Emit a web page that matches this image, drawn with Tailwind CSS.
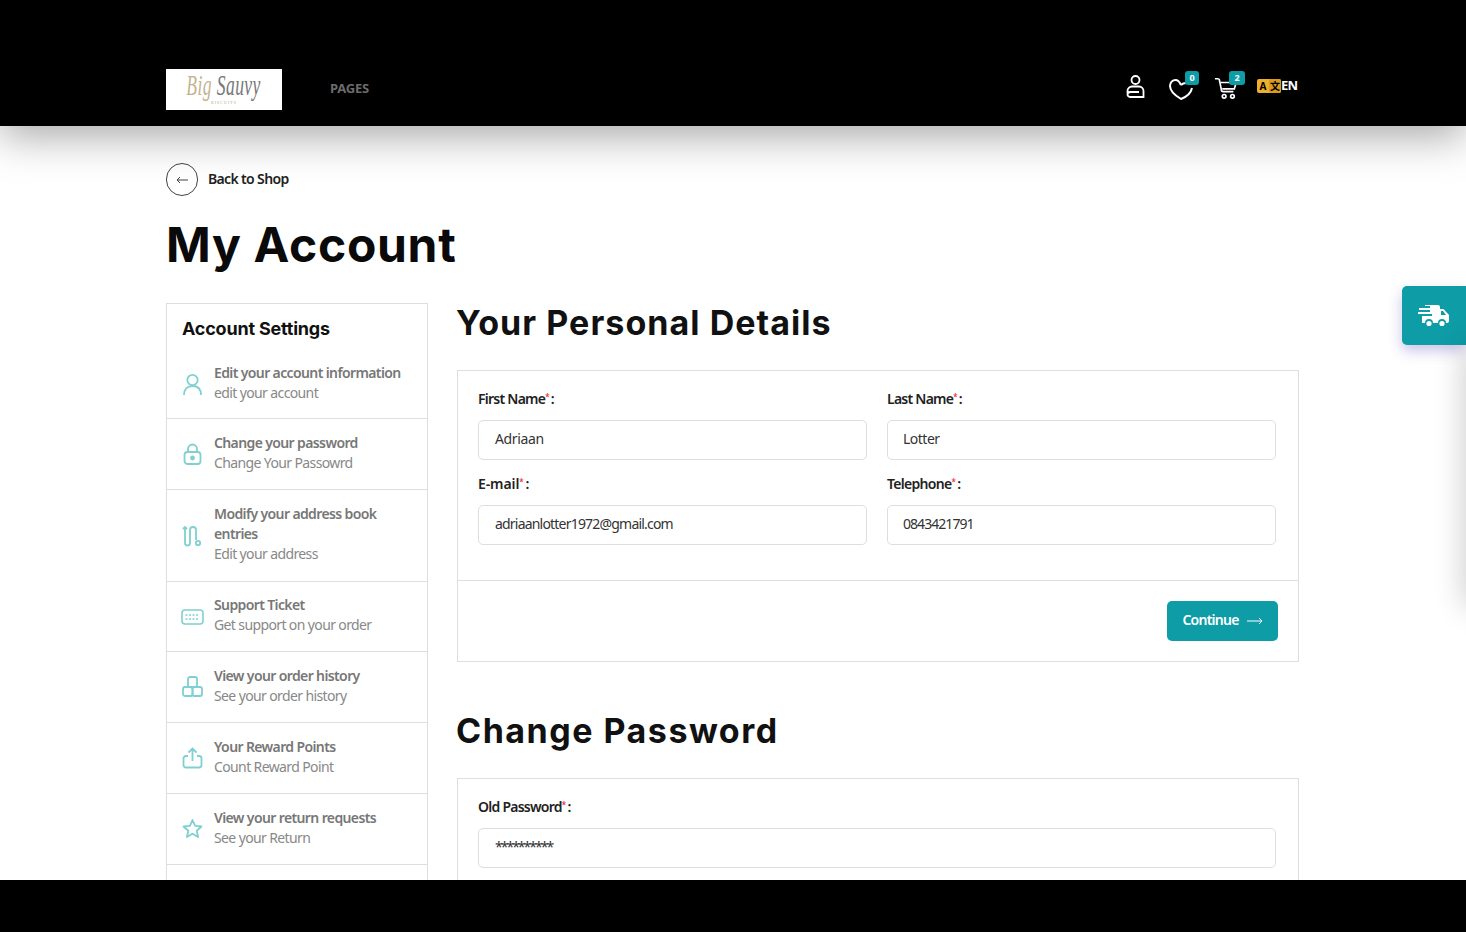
<!DOCTYPE html>
<html lang="en">
<head>
    <meta charset="UTF-8">
    <meta name="viewport" content="width=device-width, initial-scale=1.0">
    <script src="https://cdn.jsdelivr.net/npm/@tailwindcss/browser@4"></script>
    <title>My Account</title>
</head>
<body class="bg-black font-['Noto_Sans',sans-serif]">
<div class="w-[1466px] h-[932px] flex flex-col overflow-hidden">
    <!-- nav -->
    <header class="relative z-10 h-[126px] shrink-0 bg-black pl-[166px] pr-[168px] pt-[69px] flex items-start justify-between shadow-[0_10px_40px_rgba(0,0,0,0.35)]">
        <div class="flex items-center">
            <div class="w-[116px] h-[41px] bg-white flex flex-col items-center justify-center font-['Liberation_Serif',serif] italic text-[#c4b38f] leading-none overflow-hidden">
                <span class="text-[22px] tracking-[0.5px] scale-x-[0.8] scale-y-[1.3]">Big <span class="text-[#777]">Sauvy</span></span>
                <span class="text-[4px] not-italic tracking-[1px] text-[#b8a888] mt-[4px]">BISCUITS</span>
            </div>
            <a href="#" class="ml-[48px] -mt-[2px] text-[13px] font-bold text-[#6b6b6b] tracking-[-0.2px]">PAGES</a>
        </div>
        <div class="flex items-center h-[36px] text-white">
            <svg class="w-[19px] h-[23px] -mt-[1px]" viewBox="0 0 19 23" fill="none" stroke="currentColor" stroke-width="1.800"><circle cx="9.500" cy="5" r="4"/><path d="M1.500 18v-2c0-2.500 2-4.500 4.500-4.500h7c2.500 0 4.500 2 4.500 4.500v6H4.500c-1.500 0-3-1-3-2.500s1.500-2.500 3-2.500H13"/></svg>
            <div class="relative ml-[24px] w-[24px] h-[26px]">
                <svg class="w-[24px] h-[26px] mt-[2px]" viewBox="0 0 24 26" fill="none" stroke="currentColor" stroke-width="2"><path d="M12 9C10.500 5.500 8.500 4 6.500 4 3.500 4 1 6.500 1 10c0 5 6 10 11 13 5-2 10-6 11-11"/><path d="M12 9c1-1 3-2 5-2"/></svg>
                <span class="absolute -top-[3px] left-[16px] w-[14px] h-[14px] rounded-[3px] bg-[#0e9ca6] text-[9px] font-bold leading-[14px] text-center">0</span>
            </div>
            <div class="relative ml-[21px] w-[24px] h-[26px]">
                <svg class="w-[24px] h-[24px] mt-[2px]" viewBox="0 0 26 26" fill="none" stroke="currentColor" stroke-width="1.800"><path d="M1 3h3c1 0 2 1 2 2l2 10c0 1 1 2 2 2h11"/><path d="M7 7h17l-2 7H9"/><circle cx="11" cy="22" r="2"/><circle cx="20" cy="22" r="2"/></svg>
                <span class="absolute -top-[3px] left-[15px] w-[16px] h-[14px] rounded-[3px] bg-[#0e9ca6] text-[9px] font-bold leading-[14px] text-center">2</span>
            </div>
            <div class="ml-[19px] flex items-center -mt-[3px]">
                <div class="flex w-[24px] h-[14px] rounded-[2px] bg-[#efaf2c] text-black text-[10px] font-bold leading-[14px]">
                    <span class="w-[12px] text-center">A</span>
                    <span class="w-[12px] text-center bg-[#d99a1f] rounded-[2px] font-['Noto_Sans_CJK_SC',sans-serif]">文</span>
                </div>
                <span class="w-[17px] text-[13px] font-bold tracking-[-0.8px] leading-none">EN</span>
            </div>
        </div>
    </header>

    <main class="relative flex-1 min-h-0 overflow-hidden bg-white pl-[166px] pr-[167px] pt-[37px]">
        <a href="#" class="flex items-center gap-[10px] h-[33px] text-[14px] font-semibold text-[#222] tracking-[-0.65px]">
            <span class="w-[32px] h-[33px] rounded-full border border-[#444] flex items-center justify-center">
                <svg class="w-[12px] h-[8px]" viewBox="0 0 12 8" fill="none" stroke="#444" stroke-width="1"><path d="M12 4H1M4 1 1 4l3 3"/></svg>
            </span>
            <span class="pb-[2px]">Back to Shop</span>
        </a>
        <h1 class="mt-[12px] h-[74px] text-[48px] leading-[74px] font-bold text-[#0a0a0a] font-['Inter',sans-serif] tracking-[0.7px]">My Account</h1>
        <div class="mt-[21px] flex items-start gap-[29px]">
            <!-- sidebar -->
            <aside class="w-[262px] shrink-0 border border-[#dedede]">
                <h3 class="pl-[15px] pt-[13px] h-[47px] text-[18px] leading-[24px] font-bold text-[#111] font-['Inter',sans-serif] tracking-[-0.2px]">Account Settings</h3>
                <ul class="text-[14px] leading-[20px] text-[#888] tracking-[-0.62px]">
                    <li class="h-[68px] px-[15px] flex items-center gap-[11px] border-b border-[#dedede]">
                        <svg class="w-[21px] h-[24px] shrink-0" viewBox="0 0 21 24" fill="none" stroke="#7fd0d0" stroke-width="1.800"><circle cx="10.500" cy="7" r="5.200"/><path d="M2 22c0-6 3-9 8.500-9S19 16 19 22"/></svg>
                        <div class="pb-[3px]"><div class="font-semibold text-[#777]">Edit your account information</div><div>edit your account</div></div>
                    </li>
                    <li class="h-[71px] px-[15px] flex items-center gap-[11px] border-b border-[#dedede]">
                        <svg class="w-[21px] h-[24px] shrink-0" viewBox="0 0 21 24" fill="none" stroke="#7fd0d0" stroke-width="1.800"><path d="M6 10V7a4.500 4.500 0 0 1 9 0v3"/><rect x="2.500" y="10" width="16" height="12" rx="3"/><circle cx="10.500" cy="16" r="1.500" fill="#7fd0d0"/></svg>
                        <div class="pb-[3px]"><div class="font-semibold text-[#777]">Change your password</div><div>Change Your Passowrd</div></div>
                    </li>
                    <li class="h-[92px] px-[15px] flex items-center gap-[11px] border-b border-[#dedede]">
                        <svg class="w-[21px] h-[24px] shrink-0" viewBox="0 0 21 24" fill="none" stroke="#7fd0d0" stroke-width="1.800"><path d="M1 5l2-2 2 2M3 4v15a2.500 2.500 0 0 0 5 0V6a3 3 0 0 1 6 0v10"/><circle cx="16" cy="19" r="2.200"/></svg>
                        <div class="pb-[3px]"><div class="font-semibold text-[#777]">Modify your address book<br>entries</div><div>Edit your address</div></div>
                    </li>
                    <li class="h-[70px] px-[15px] flex items-center gap-[11px] border-b border-[#dedede]">
                        <svg class="w-[23px] h-[16px] shrink-0 -ml-[1px] -mr-[1px]" viewBox="0 0 23 16" fill="none" stroke="#7fd0d0" stroke-width="1.600"><rect x="1" y="1" width="21" height="14" rx="3"/><path stroke-dasharray="2 1.500" d="M4.500 6h14M4.500 10h14"/></svg>
                        <div class="pb-[3px]"><div class="font-semibold text-[#777]">Support Ticket</div><div>Get support on your order</div></div>
                    </li>
                    <li class="h-[71px] px-[15px] flex items-center gap-[11px] border-b border-[#dedede]">
                        <svg class="w-[21px] h-[24px] shrink-0" viewBox="0 0 21 24" fill="none" stroke="#7fd0d0" stroke-width="1.800"><rect x="6" y="2" width="9" height="10" rx="2"/><rect x="1" y="12" width="9.500" height="9" rx="2"/><rect x="10.500" y="12" width="9.500" height="9" rx="2"/></svg>
                        <div class="pb-[3px]"><div class="font-semibold text-[#777]">View your order history</div><div>See your order history</div></div>
                    </li>
                    <li class="h-[71px] px-[15px] flex items-center gap-[11px] border-b border-[#dedede]">
                        <svg class="w-[21px] h-[24px] shrink-0" viewBox="0 0 21 24" fill="none" stroke="#7fd0d0" stroke-width="1.800"><path d="M10.500 15V3M6.500 6.500l4-4 4 4"/><path d="M6 10H4a2.500 2.500 0 0 0-2.500 2.500V19A2.500 2.500 0 0 0 4 21.500h13a2.500 2.500 0 0 0 2.500-2.500v-6.500A2.500 2.500 0 0 0 17 10h-2"/></svg>
                        <div class="pb-[3px]"><div class="font-semibold text-[#777]">Your Reward Points</div><div>Count Reward Point</div></div>
                    </li>
                    <li class="h-[71px] px-[15px] flex items-center gap-[11px] border-b border-[#dedede]">
                        <svg class="w-[21px] h-[24px] shrink-0" viewBox="0 0 21 24" fill="none" stroke="#7fd0d0" stroke-width="1.800" stroke-linejoin="round"><path d="M10.500 3l2.600 5.800 6.400.7-4.800 4.200 1.400 6.300-5.600-3.300L4.900 20l1.400-6.300L1.500 9.500l6.400-.7z"/></svg>
                        <div class="pb-[3px]"><div class="font-semibold text-[#777]">View your return requests</div><div>See your Return</div></div>
                    </li>
                    <li class="h-[71px]"></li>
                </ul>
            </aside>

            <!-- forms -->
            <div class="flex-1 min-w-0">
                <h2 class="-mt-[6px] h-[60px] text-[34px] leading-[52px] font-bold text-[#111] font-['Inter',sans-serif] tracking-[1.05px] -ml-[1px]">Your Personal Details</h2>
                <section class="mt-[13px] border border-[#dedede] h-[292px]">
                    <div class="h-[210px] border-b border-[#dedede] pl-[20px] pr-[21px] pt-[18px] grid grid-cols-[389px_389px] gap-x-[20px] content-start">
                        <div class="h-[85px]">
                            <label class="block h-[31px] text-[14px] leading-[20px] font-semibold text-[#222] tracking-[-0.75px]">First Name<sup class="text-[8px] text-red-500">*</sup><span class="ml-[2px]">:</span></label>
                            <div class="h-[40px] border border-[#dedede] rounded-[5px] pl-[16px] text-[14px] leading-[36px] text-[#333] tracking-[-0.35px]">Adriaan</div>
                        </div>
                        <div class="h-[85px]">
                            <label class="block h-[31px] text-[14px] leading-[20px] font-semibold text-[#222] tracking-[-0.75px]">Last Name<sup class="text-[8px] text-red-500">*</sup><span class="ml-[2px]">:</span></label>
                            <div class="h-[40px] border border-[#dedede] rounded-[5px] pl-[15px] text-[14px] leading-[36px] text-[#333] tracking-[-0.5px]">Lotter</div>
                        </div>
                        <div class="h-[85px]">
                            <label class="block h-[31px] text-[14px] leading-[20px] font-semibold text-[#222] tracking-[-0.1px]">E-mail<sup class="text-[8px] text-red-500">*</sup><span class="ml-[2px]">:</span></label>
                            <div class="h-[40px] border border-[#dedede] rounded-[5px] pl-[16px] text-[14px] leading-[36px] text-[#333] tracking-[-0.8px]">adriaanlotter1972@gmail.com</div>
                        </div>
                        <div class="h-[85px]">
                            <label class="block h-[31px] text-[14px] leading-[20px] font-semibold text-[#222] tracking-[-0.7px]">Telephone<sup class="text-[8px] text-red-500">*</sup><span class="ml-[2px]">:</span></label>
                            <div class="h-[40px] border border-[#dedede] rounded-[5px] pl-[15px] text-[14px] leading-[36px] text-[#333] tracking-[-0.95px]">0843421791</div>
                        </div>
                    </div>
                    <div class="flex justify-end pr-[20px] pt-[20px]">
                        <button class="w-[111px] h-[40px] rounded-[5px] bg-[#0e9ca6] text-white text-[14px] font-semibold tracking-[-0.75px] flex items-center justify-center gap-[8px]"><span class="pb-[4px]">Continue</span>
                            <svg class="w-[16px] h-[8px]" viewBox="0 0 16 8" fill="none" stroke="currentColor" stroke-width="1"><path d="M0 4h15M12 1l3 3-3 3"/></svg>
                        </button>
                    </div>
                </section>
                <h2 class="mt-[43px] h-[52px] text-[34px] leading-[52px] font-bold text-[#111] font-['Inter',sans-serif] tracking-[1.5px] -ml-[1px]">Change Password</h2>
                <section class="mt-[21px] border border-[#dedede] pl-[20px] pr-[21px] pt-[18px] h-[200px]">
                    <label class="block h-[31px] text-[14px] leading-[20px] font-semibold text-[#222] tracking-[-0.75px]">Old Password<sup class="text-[8px] text-red-500">*</sup><span class="ml-[2px]">:</span></label>
                    <div class="h-[40px] w-[798px] border border-[#dedede] rounded-[5px] pl-[16px] text-[14px] leading-[36px] text-[#333] tracking-[-2px]">**********</div>
                </section>
            </div>
        </div>

        <!-- delivery tab -->
        <div class="absolute left-[1402px] top-[160px] w-[64px] h-[59px] rounded-l-[5px] bg-[#0e9ca6] flex items-center pl-[16px] shadow-[0_6px_14px_rgba(80,60,180,0.3)]">
            <svg class="w-[31px] h-[25px]" viewBox="0 0 31 25" fill="white"><path d="M7 2h13a2 2 0 0 1 2 2v2h3.500L31 12v6a2 2 0 0 1-2 2h-1a4 4 0 0 0-8 0h-5a4 4 0 0 0-8 0H4v-7h10v-2H0V9h12V7H1V5h11V3H7zM23 8v4h5l-3-4z"/><circle cx="11" cy="20.500" r="2.600"/><circle cx="24" cy="20.500" r="2.600"/></svg>
        </div>
        <!-- offcanvas edge shadow -->
        <div class="absolute left-[1466px] top-[220px] w-[20px] h-[260px] bg-white shadow-[0_0_30px_rgba(0,0,0,0.25)]"></div>
    </main>
    <div class="h-[52px] shrink-0 bg-black"></div>
</div>
</body>
</html>
